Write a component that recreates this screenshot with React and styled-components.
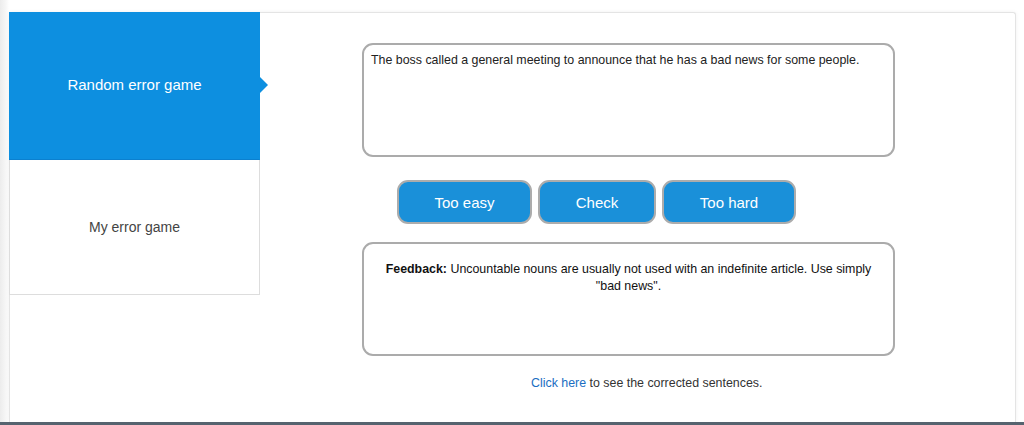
import React from "react";
import styled, { createGlobalStyle } from "styled-components";

const GlobalStyle = createGlobalStyle`
  html, body {
    margin: 0;
    padding: 0;
    background: #ffffff;
    font-family: "Liberation Sans", Arial, sans-serif;
  }
`

const Page = styled.div`
  height: 425px;
  overflow: hidden;
  display: flex;
  flex-direction: column;
  background: linear-gradient(to right, #ececec 0, #f7f7f7 6px, #ffffff 9px);
`

const Shell = styled.div`
  flex: 1;
  min-height: 0;
  padding: 12px 8px 0 9px;
  display: flex;
`

const Card = styled.div`
  flex: 1;
  display: flex;
  background: #ffffff;
  border: 1px solid #e4e4e4;
  border-bottom: none;
  border-radius: 3px 3px 0 0;
  box-shadow: 0 0 4px rgba(0, 0, 0, 0.06);
`

const Sidebar = styled.div`
  width: 251px;
  flex-shrink: 0;
  display: flex;
  flex-direction: column;
  margin-top: -1px;
  margin-left: -1px;
`

const Tab = styled.div`
  position: relative;
  height: ${p => p.$height}px;
  display: flex;
  align-items: center;
  justify-content: center;
  padding-bottom: ${p => (p.$active ? 3 : 0)}px;
  font-size: ${p => (p.$active ? 15 : 14)}px;
  color: ${p => (p.$active ? "#ffffff" : "#444444")};
  background: ${p => (p.$active ? "#0d8fe0" : "#ffffff")};
  border: 1px solid ${p => (p.$active ? "#0d8fe0" : "#dddddd")};
  border-top: ${p => (p.$active ? "1px solid #0d8fe0" : "none")};
  border-bottom-color: ${p => (p.$active ? "#0b80cf" : "#dddddd")};
  box-sizing: border-box;

  &::after {
    content: "";
    display: ${p => (p.$active ? "block" : "none")};
    position: absolute;
    right: -9px;
    top: 50%;
    margin-top: -9px;
    border-top: 8px solid transparent;
    border-bottom: 8px solid transparent;
    border-left: 8px solid #0d8fe0;
  }
`

const Main = styled.div`
  flex: 1;
  padding: 30px 0 0 102px;
  display: flex;
  flex-direction: column;
  align-items: flex-start;
`

const TextBox = styled.div`
  width: 533px;
  height: 114px;
  box-sizing: border-box;
  border: 2px solid #ababab;
  border-radius: 11px;
  padding: ${p => (p.$center ? "17px 16px" : "7px 7px")};
  font-size: 12.4px;
  line-height: 17px;
  color: ${p => (p.$center ? "#111111" : "#222222")};
  text-align: ${p => (p.$center ? "center" : "left")};
`

const Buttons = styled.div`
  display: flex;
  gap: 6px;
  margin: 23px 0 18px 35px;
`

const Button = styled.button`
  width: ${p => p.$width}px;
  height: 44px;
  box-sizing: border-box;
  border: 2px solid #acacac;
  border-radius: 11px;
  background: #1a90d9;
  color: #ffffff;
  font-family: "Liberation Sans", Arial, sans-serif;
  font-size: 15px;
  cursor: pointer;
`

const Note = styled.div`
  margin: 20px 0 0 169px;
  font-size: 12.4px;
  color: #333333;
`

const Link = styled.a`
  color: #1a6ec2;
  text-decoration: none;
`

const Taskbar = styled.div`
  height: 3px;
  background: #56636f;
  flex-shrink: 0;
`

export default function App() {
  return (
    <>
      <GlobalStyle />
      <Page>
        <Shell>
          <Card>
            <Sidebar>
              <Tab $active $height={148}>Random error game</Tab>
              <Tab $height={135}>My error game</Tab>
            </Sidebar>
            <Main>
              <TextBox>
                The boss called a general meeting to announce that he has a bad news for some people.
              </TextBox>
              <Buttons>
                <Button $width={135}>Too easy</Button>
                <Button $width={118}>Check</Button>
                <Button $width={134}>Too hard</Button>
              </Buttons>
              <TextBox $center>
                <b>Feedback:</b> Uncountable nouns are usually not used with an indefinite article. Use simply "bad news".
              </TextBox>
              <Note>
                <Link href="#">Click here</Link> to see the corrected sentences.
              </Note>
            </Main>
          </Card>
        </Shell>
        <Taskbar />
      </Page>
    </>
  );
}
